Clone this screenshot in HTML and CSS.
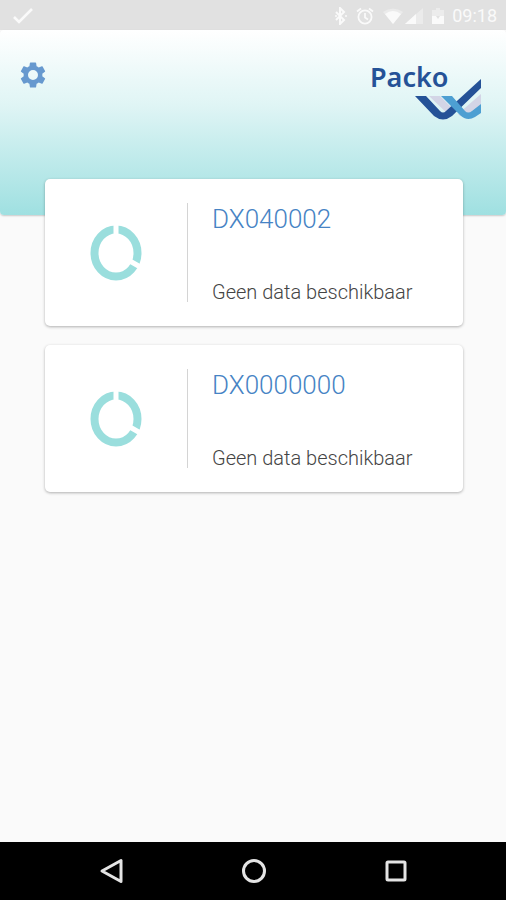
FILE: index.html
```html
<!DOCTYPE html>
<html lang="nl">
<head>
<meta charset="utf-8">
<meta name="viewport" content="width=device-width, initial-scale=1">
<title>Packo</title>
<link rel="stylesheet" href="styles.css">
</head>
<body>
<div class="status">
  <svg class="status-check" width="20" height="16" viewBox="0 0 20 16"><path d="M1 9l5 5L19 1" fill="none" stroke="currentColor" stroke-width="2.6"/></svg>
  <div class="status-icons">
    <svg width="14" height="18" viewBox="0 0 14 18"><path d="M2 5l8 8-4 4V1l4 4-8 8" fill="none" stroke="currentColor" stroke-width="2"/><circle cx="2" cy="9" r="1" fill="currentColor"/><circle cx="12" cy="9" r="1" fill="currentColor"/></svg>
    <svg class="alarm" width="18" height="18" viewBox="0 0 18 18" fill="none" stroke="currentColor" stroke-width="1.8"><circle cx="9" cy="10" r="6.6"/><path d="M1 4.500l4-3M17 4.500l-4-3M9 6v4.500l3 2"/></svg>
    <svg class="wifi" width="20" height="18" viewBox="0 0 20 18"><path d="M0 5Q10-2 20 5L10 17z" fill="currentColor" opacity=".4"/><path d="M2 7Q10 1 18 7L10 17z" fill="currentColor"/></svg>
    <svg class="signal" width="18" height="18" viewBox="0 0 18 18"><path d="M0 17L18 1V17z" fill="currentColor" opacity=".4"/><path d="M0 17L11 7V17z" fill="currentColor"/></svg>
    <svg class="battery" width="12" height="18" viewBox="0 0 12 18"><path d="M4 1h4v2h4v6H0V3h4z" fill="currentColor" opacity=".45"/><path d="M0 9h4l2 3 2-3h4v8H0z" fill="currentColor"/></svg>
    <time class="clock">09:18</time>
  </div>
</div>
<header class="header">
  <button class="settings" type="button" aria-label="Instellingen">
    <svg width="30" height="30" viewBox="0 0 24 24"><path fill="currentColor" d="M19.430 12.980c.04-.32.07-.64.07-.98s-.03-.66-.07-.98l2.110-1.650c.19-.15.24-.42.12-.64l-2-3.460c-.12-.22-.39-.3-.61-.22l-2.490 1c-.52-.4-1.080-.73-1.690-.98l-.38-2.650C14.460 2.180 14.250 2 14 2h-4c-.25 0-.46.18-.49.42l-.38 2.650c-.61.25-1.170.59-1.690.98l-2.490-1c-.23-.09-.49 0-.61.22l-2 3.460c-.13.22-.07.49.12.64l2.110 1.650c-.04.32-.07.65-.07.98s.03.66.07.98l-2.110 1.650c-.19.15-.24.42-.12.64l2 3.460c.12.22.39.3.61.22l2.490-1c.52.4 1.080.73 1.690.98l.38 2.650c.03.24.24.42.49.42h4c.25 0 .46-.18.49-.42l.38-2.650c.61-.25 1.170-.59 1.690-.98l2.490 1c.23.09.49 0 .61-.22l2-3.460c.12-.22.07-.49-.12-.64zM12 16a4 4 0 1 1 0-8 4 4 0 0 1 0 8z"/></svg>
  </button>
  <div class="logo">
    <span class="logo-name">Packo</span>
    <svg class="logo-mark" width="68" height="42" viewBox="0 0 68 42">
      <path fill="#d3d5e6" d="M15 18H26L40 32L36 38zM67 16V26L55 38H46L44 36z"/>
      <path fill="#255297" d="M1 18H12L26 33Q29 36 32 33L67 1V10L38 38Q29 45 20 38z"/>
      <path fill="#4d9fd2" d="M27 18H38L51 33Q54 36 58 33L67 26V35L61 39Q53 44 46 37z"/>
    </svg>
  </div>
</header>
<main class="devices">
  <a class="card" href="#DX040002">
    <span class="card-icon"><svg width="52" height="56" viewBox="0 0 52 56"><g fill="none" stroke="#9adedd" stroke-width="8"><ellipse cx="26" cy="28" rx="21.500" ry="23.500"/></g><path d="M26 28V0M26 28L52 43" stroke="#fff" stroke-width="5"/></svg></span>
    <span class="card-text"><strong class="card-title">DX040002</strong><span class="card-status">Geen data beschikbaar</span></span>
  </a>
  <a class="card" href="#DX0000000">
    <span class="card-icon"><svg width="52" height="56" viewBox="0 0 52 56"><g fill="none" stroke="#9adedd" stroke-width="8"><ellipse cx="26" cy="28" rx="21.500" ry="23.500"/></g><path d="M26 28V0M26 28L52 43" stroke="#fff" stroke-width="5"/></svg></span>
    <span class="card-text"><strong class="card-title">DX0000000</strong><span class="card-status">Geen data beschikbaar</span></span>
  </a>
</main>
<nav class="navbar">
  <button type="button" aria-label="Terug"><svg width="26" height="26" viewBox="0 0 26 26"><path d="M3 13L22 2.500V23.500z"/></svg></button>
  <button type="button" aria-label="Start"><svg width="26" height="26" viewBox="0 0 26 26"><circle cx="13" cy="13" r="10.500"/></svg></button>
  <button type="button" aria-label="Overzicht"><svg width="26" height="26" viewBox="0 0 26 26"><rect x="4" y="4" width="18" height="18" rx="1"/></svg></button>
</nav>
</body>
</html>
```
FILE: styles.css
```css
* {
  box-sizing: border-box;
}

body {
  margin: 0;
  min-height: 100vh;
  display: flex;
  flex-direction: column;
  background: #fafafa;
  font-family: Roboto, "Liberation Sans", sans-serif;
}

svg {
  display: block;
}

button {
  margin: 0;
  padding: 0;
  border: 0;
  background: none;
  cursor: pointer;
}

.status {
  display: flex;
  align-items: center;
  justify-content: space-between;
  height: 30px;
  padding: 2px 9px 0 13px;
  background: #e1e1e1;
  color: #fafafa;
}

.status-icons {
  display: flex;
  align-items: center;
}

.alarm {
  margin-left: 8px;
}

.wifi {
  margin-left: 9px;
}

.signal {
  margin-left: 2px;
}

.battery {
  margin-left: 9px;
}

.clock {
  margin-left: 8px;
  font-size: 18px;
  line-height: 24px;
}

.header {
  display: flex;
  align-items: flex-start;
  justify-content: space-between;
  height: 185px;
  padding: 30px 24px 0 18px;
  border-radius: 4px;
  background: linear-gradient(#fff, #e0f5f5 40%, #9fe0e1);
  box-shadow: 0 1px 2px rgba(0, 0, 0, 0.2);
}

.settings {
  color: #6799cf;
}

.logo {
  display: flex;
  flex-direction: column;
  align-items: flex-end;
  width: 112px;
}

.logo-name {
  align-self: flex-start;
  color: #255297;
  font-family: "Noto Sans", "Open Sans", sans-serif;
  font-size: 27px;
  font-weight: 600;
  line-height: 34px;
}

.logo-mark {
  margin-top: -16px;
}

.devices {
  flex: 1;
  display: flex;
  flex-direction: column;
  gap: 19px;
  margin-top: -36px;
  padding: 0 43px 24px 45px;
}

.card {
  display: flex;
  padding: 24px;
  border-radius: 5px;
  background: #fff;
  box-shadow: 0 1px 3px rgba(0, 0, 0, 0.3);
  text-decoration: none;
}

.card-icon {
  display: flex;
  align-items: center;
  padding: 0 45px 0 21px;
  border-right: 1px solid #d4d4d4;
}

.card-text {
  display: flex;
  flex-direction: column;
  justify-content: space-between;
  height: 99px;
  padding-left: 24px;
}

.card-title {
  color: #4683c4;
  font-size: 26px;
  font-weight: 300;
  line-height: 32px;
}

.card-status {
  color: #444;
  font-size: 20px;
  font-weight: 300;
  line-height: 20px;
}

.navbar {
  display: flex;
  align-items: center;
  justify-content: center;
  gap: 116px;
  height: 58px;
  padding-left: 1px;
  background: #000;
}

.navbar svg {
  fill: none;
  stroke: #e4e4e4;
  stroke-width: 3px;
  stroke-linejoin: round;
}
```
